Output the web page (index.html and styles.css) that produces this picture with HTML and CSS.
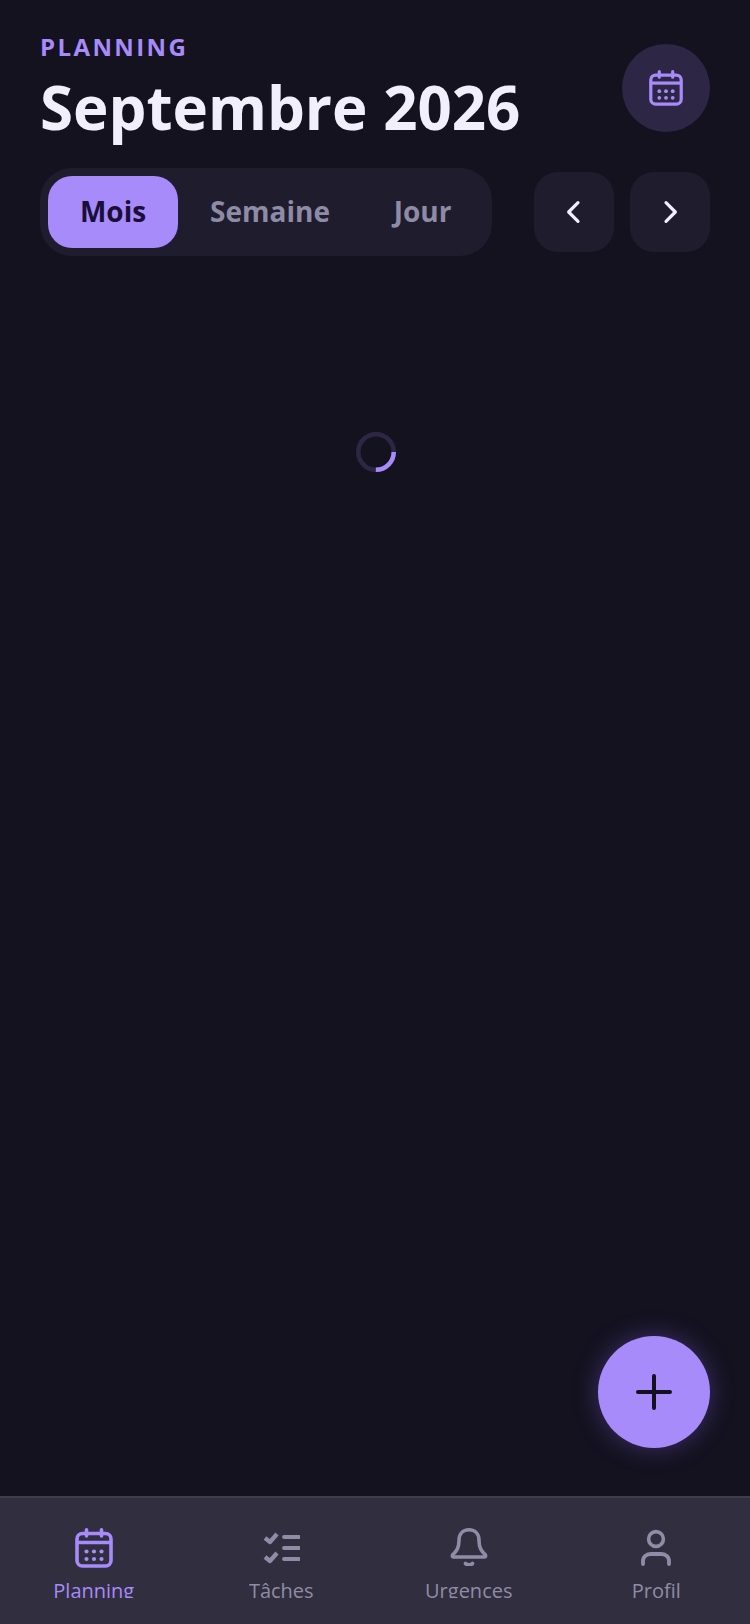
FILE: index.html
```html
<!DOCTYPE html>
<html lang="fr">
<head>
<meta charset="utf-8">
<title>Planning</title>
<link rel="stylesheet" href="styles.css">
</head>
<body>
<svg class="defs" width="0" height="0" aria-hidden="true">
  <symbol id="cal" viewBox="0 0 38 40">
    <rect x="2" y="5.500" width="34" height="32.500" rx="5.500" fill="none" stroke="currentColor" stroke-width="3.600"/>
    <path d="M2 14.500H36" fill="none" stroke="currentColor" stroke-width="3.600"/>
    <path d="M11.500 1.800V8M26.500 1.800V8" fill="none" stroke="currentColor" stroke-width="3.600" stroke-linecap="round"/>
    <g fill="currentColor"><circle cx="11.500" cy="23.500" r="2.100"/><circle cx="19" cy="23.500" r="2.100"/><circle cx="26.500" cy="23.500" r="2.100"/><circle cx="11.500" cy="31" r="2.100"/><circle cx="19" cy="31" r="2.100"/><circle cx="26.500" cy="31" r="2.100"/></g>
  </symbol>
</svg>
<div class="screen">
  <header class="header">
    <div class="heading">
      <div class="eyebrow">PLANNING</div>
      <h1 class="title">Septembre 2026</h1>
    </div>
    <button class="today"><svg class="today-icon"><use href="#cal"/></svg></button>
  </header>
  <div class="controls">
    <div class="segment">
      <div class="seg seg-active">Mois</div>
      <div class="seg seg-semaine">Semaine</div>
      <div class="seg seg-jour">Jour</div>
    </div>
    <div class="arrows">
      <button class="arrow"><svg viewBox="0 0 24 24" class="chev"><path d="M15 5L8 12L15 19"/></svg></button>
      <button class="arrow"><svg viewBox="0 0 24 24" class="chev"><path d="M9 5L16 12L9 19"/></svg></button>
    </div>
  </div>
  <main class="content">
    <svg class="spinner" viewBox="0 0 40 40"><circle class="spin-track" cx="20" cy="20" r="17.750"/><circle class="spin-arc" cx="20" cy="20" r="17.750"/></svg>
    <button class="fab"><svg viewBox="0 0 36 36" class="plus"><path d="M18 2V34M2 18H34"/></svg></button>
  </main>
  <nav class="tabbar">
    <div class="tab tab-active">
      <svg class="tab-icon tab-icon-cal"><use href="#cal"/></svg>
      <span class="tab-label">Planning</span>
    </div>
    <div class="tab">
      <svg class="tab-icon" viewBox="0 0 38 38"><path d="M3 10L8 14L15 6M3 29L8 33L15 25" fill="none" stroke="currentColor" stroke-width="4.200" stroke-linejoin="round"/><path d="M22 9H37M22 20H37M22 31H37" fill="none" stroke="currentColor" stroke-width="3.800" stroke-linecap="round"/></svg>
      <span class="tab-label">Tâches</span>
    </div>
    <div class="tab">
      <svg class="tab-icon" viewBox="0 0 38 38"><path d="M19 1.800C12.500 1.800 9 6.500 9 12.500C9 20 6.500 23 2.500 27C2 28.500 2.500 29 4 29H34C35.500 29 36 28.500 35.500 27C31.500 23 29 20 29 12.500C29 6.500 25.500 1.800 19 1.800Z" fill="none" stroke="currentColor" stroke-width="3.600" stroke-linejoin="round"/><path d="M15.500 35.500C17 37.300 21 37.300 22.500 35.500" fill="none" stroke="currentColor" stroke-width="3.600" stroke-linecap="round"/></svg>
      <span class="tab-label">Urgences</span>
    </div>
    <div class="tab">
      <svg class="tab-icon" viewBox="0 0 38 38"><circle cx="19" cy="11" r="7.400" fill="none" stroke="currentColor" stroke-width="3.600"/><path d="M6 36V33C6 28.500 10 26 14 26H24C28 26 32 28.500 32 33V36" fill="none" stroke="currentColor" stroke-width="3.800" stroke-linecap="round"/></svg>
      <span class="tab-label">Profil</span>
    </div>
  </nav>
</div>
</body>
</html>
```
FILE: styles.css
```css
* { box-sizing: border-box; }
html, body { margin: 0; padding: 0; }
body { background: #14121f; font-family: "Open Sans", sans-serif; }
button { border: 0; padding: 0; margin: 0; font: inherit; }
.defs { position: absolute; }
.screen { width: 750px; height: 1624px; display: flex; flex-direction: column; background: #14121f; overflow: hidden; }

.header { display: flex; justify-content: space-between; align-items: flex-start; padding: 31px 40px 0; }
.eyebrow { color: #a78bfa; font-size: 24px; line-height: 32px; font-weight: 700; letter-spacing: 2.400px; }
.title { margin: 12px 0 0; color: #f1effc; font-size: 60px; line-height: 64px; font-weight: 700; height: 64px; }
.today { width: 88px; height: 88px; margin-top: 13px; border-radius: 50%; background: #2d2745; color: #a78bfa; display: flex; align-items: center; justify-content: center; }
.today-icon { width: 34px; height: 36px; }

.controls { display: flex; justify-content: space-between; align-items: center; padding: 29px 40px 0; }
.segment { display: flex; align-items: center; width: 452px; height: 88px; padding: 8px; border-radius: 32px; background: #1f1c2e; }
.seg { height: 72px; padding-bottom: 2px; display: flex; align-items: center; justify-content: center; font-size: 28px; font-weight: 700; color: #8e8ba6; }
.seg-active { width: 130px; border-radius: 24px; background: #a78bfa; color: #1a0f38; }
.seg-semaine { width: 184px; }
.seg-jour { width: 121px; }
.arrows { display: flex; gap: 16px; }
.arrow { width: 80px; height: 80px; border-radius: 24px; background: #1f1c2e; display: flex; align-items: center; justify-content: center; }
.chev { width: 32px; height: 32px; fill: none; stroke: #f1effc; stroke-width: 2.400; stroke-linecap: round; stroke-linejoin: round; }

.content { flex: 1; position: relative; display: block; }
.spinner { position: absolute; left: 356px; top: 176px; width: 40px; height: 40px; fill: none; stroke-width: 4.500; }
.spin-track { stroke: #2d2745; }
.spin-arc { stroke: #a78bfa; stroke-dasharray: 27.880 111.530; }
.fab { position: absolute; right: 40px; bottom: 48px; width: 112px; height: 112px; border-radius: 50%; background: #a78bfa; display: flex; align-items: center; justify-content: center; box-shadow: 0 0 24px rgba(139,100,246,0.35); }
.plus { width: 36px; height: 36px; fill: none; stroke: #14101f; stroke-width: 4; stroke-linecap: round; }

.tabbar { height: 128px; flex: none; display: grid; grid-template-columns: repeat(4, 1fr); background: #312e3f; border-top: 2px solid #3f3c4e; padding-top: 30px; }
.tab { display: flex; flex-direction: column; align-items: center; color: #8f8ca6; }
.tab-active { color: #a78bfa; }
.tab-icon { width: 38px; height: 38px; display: block; }
.tab-icon-cal { height: 40px; margin-bottom: -2px; }
.tab-label { font-size: 20px; line-height: 30px; height: 22px; margin-top: 10px; overflow: hidden; }
```
